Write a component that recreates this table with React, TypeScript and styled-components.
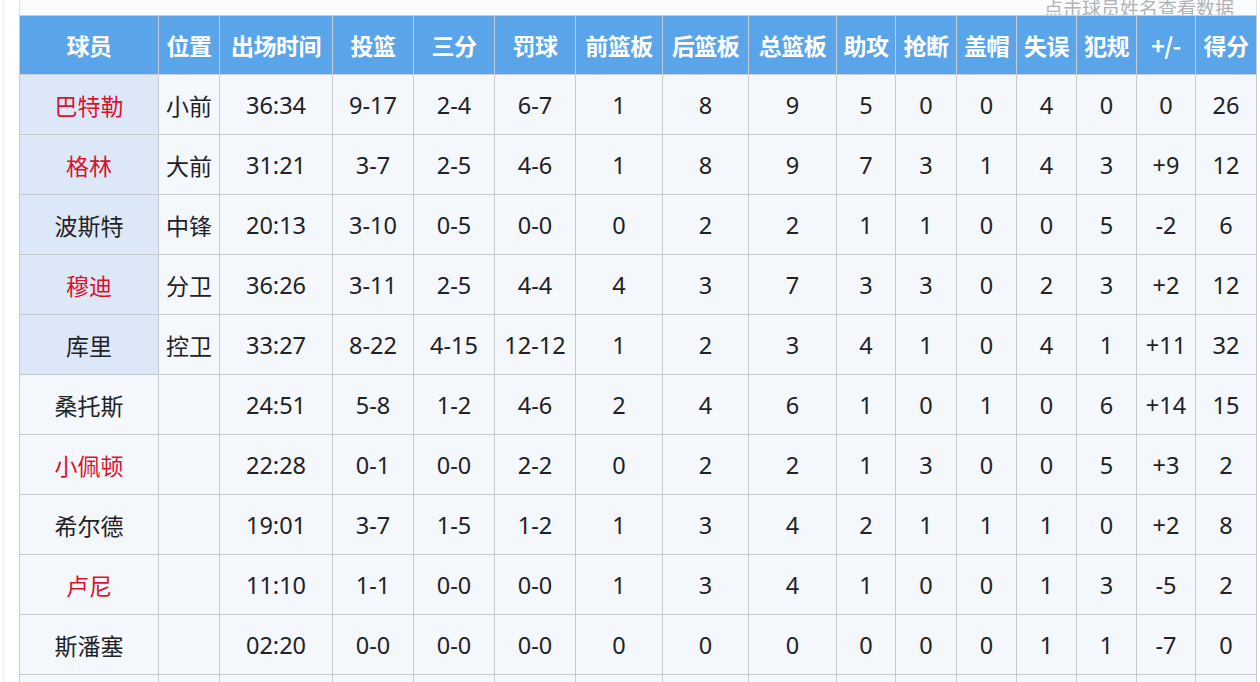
import styled, { createGlobalStyle } from 'styled-components';

type Player = {
  name: string;
  pos: string;
  starter: boolean;
  link: boolean;
  stats: string[];
};

const headers = ['球员', '位置', '出场时间', '投篮', '三分', '罚球', '前篮板', '后篮板', '总篮板', '助攻', '抢断', '盖帽', '失误', '犯规', '+/-', '得分'];
const widths = [139, 61, 113, 81, 81, 81, 87, 86, 88, 59, 61, 60, 60, 60, 59, 61];

const players: Player[] = [
  { name: '巴特勒', pos: '小前', starter: true, link: true, stats: ['36:34', '9-17', '2-4', '6-7', '1', '8', '9', '5', '0', '0', '4', '0', '0', '26'] },
  { name: '格林', pos: '大前', starter: true, link: true, stats: ['31:21', '3-7', '2-5', '4-6', '1', '8', '9', '7', '3', '1', '4', '3', '+9', '12'] },
  { name: '波斯特', pos: '中锋', starter: true, link: false, stats: ['20:13', '3-10', '0-5', '0-0', '0', '2', '2', '1', '1', '0', '0', '5', '-2', '6'] },
  { name: '穆迪', pos: '分卫', starter: true, link: true, stats: ['36:26', '3-11', '2-5', '4-4', '4', '3', '7', '3', '3', '0', '2', '3', '+2', '12'] },
  { name: '库里', pos: '控卫', starter: true, link: false, stats: ['33:27', '8-22', '4-15', '12-12', '1', '2', '3', '4', '1', '0', '4', '1', '+11', '32'] },
  { name: '桑托斯', pos: '', starter: false, link: false, stats: ['24:51', '5-8', '1-2', '4-6', '2', '4', '6', '1', '0', '1', '0', '6', '+14', '15'] },
  { name: '小佩顿', pos: '', starter: false, link: true, stats: ['22:28', '0-1', '0-0', '2-2', '0', '2', '2', '1', '3', '0', '0', '5', '+3', '2'] },
  { name: '希尔德', pos: '', starter: false, link: false, stats: ['19:01', '3-7', '1-5', '1-2', '1', '3', '4', '2', '1', '1', '1', '0', '+2', '8'] },
  { name: '卢尼', pos: '', starter: false, link: true, stats: ['11:10', '1-1', '0-0', '0-0', '1', '3', '4', '1', '0', '0', '1', '3', '-5', '2'] },
  { name: '斯潘塞', pos: '', starter: false, link: false, stats: ['02:20', '0-0', '0-0', '0-0', '0', '0', '0', '0', '0', '0', '1', '1', '-7', '0'] },
  { name: '', pos: '', starter: false, link: false, stats: ['', '', '', '', '', '', '', '', '', '', '', '', '', ''] },
];

const GlobalStyle = createGlobalStyle`
  html, body {
    margin: 0;
    padding: 0;
    background: #ffffff;
    overflow: hidden;
  }
  body {
    font-family: "Noto Sans", "Noto Sans CJK SC", sans-serif;
  }
`;

const Page = styled.div`
  width: 1257px;
  height: 682px;
  overflow: hidden;
  box-sizing: border-box;
  border-left: 1px solid #eef0f2;
  margin-left: 3px;
  padding-left: 15px;
`;

const Caption = styled.div`
  height: 15px;
  overflow: hidden;
  display: flex;
  justify-content: flex-end;
  align-items: flex-end;
  padding-right: 22px;
  width: 1238px;
  box-sizing: border-box;
  background: #fbfcfd;
  border-left: 1px solid #dde2e7;
  border-right: 1px solid #dde2e7;
`;

const CaptionText = styled.span`
  font-family: "Noto Sans CJK SC", sans-serif;
  font-size: 19px;
  line-height: 19px;
  color: #b0b4b9;
  margin-bottom: -2px;
`;

const Table = styled.table`
  border-collapse: collapse;
  table-layout: fixed;
  width: 1238px;
`;

const HeadCell = styled.th`
  height: 58px;
  padding: 0;
  background: #5aa5ea;
  color: #ffffff;
  font-family: "Noto Sans CJK SC", sans-serif;
  font-size: 23px;
  font-weight: 700;
  text-align: center;
  border: 1px solid #c4ccd6;
  white-space: nowrap;
  letter-spacing: -0.5px;
  overflow: hidden;
`;

const Cell = styled.td<{ $starter?: boolean }>`
  height: 59px;
  padding: 0;
  background: ${(p) => (p.$starter ? '#dce8f8' : '#f4f7fb')};
  color: #1f2226;
  font-family: "Noto Sans", "Noto Sans CJK SC", sans-serif;
  font-size: 23.5px;
  text-align: center;
  border: 1px solid #c6cbd1;
  white-space: nowrap;
`;

const Name = styled.span<{ $link: boolean }>`
  font-family: "Noto Sans CJK SC", sans-serif;
  font-size: 23px;
  color: ${(p) => (p.$link ? '#d8142c' : '#1f2226')};
`;

const Pos = styled.span`
  font-family: "Noto Sans CJK SC", sans-serif;
  font-size: 23px;
`;

export default function App() {
  return (
    <>
      <GlobalStyle />
      <Page>
        <Caption>
          <CaptionText>点击球员姓名查看数据</CaptionText>
        </Caption>
        <Table>
          <colgroup>
            {widths.map((w, i) => (
              <col key={i} style={{ width: w }} />
            ))}
          </colgroup>
          <thead>
            <tr>
              {headers.map((h) => (
                <HeadCell key={h}>{h}</HeadCell>
              ))}
            </tr>
          </thead>
          <tbody>
            {players.map((p, i) => (
              <tr key={i}>
                <Cell $starter={p.starter}>
                  <Name $link={p.link}>{p.name}</Name>
                </Cell>
                <Cell>
                  <Pos>{p.pos}</Pos>
                </Cell>
                {p.stats.map((s, j) => (
                  <Cell key={j}>{s}</Cell>
                ))}
              </tr>
            ))}
          </tbody>
        </Table>
      </Page>
    </>
  );
}
